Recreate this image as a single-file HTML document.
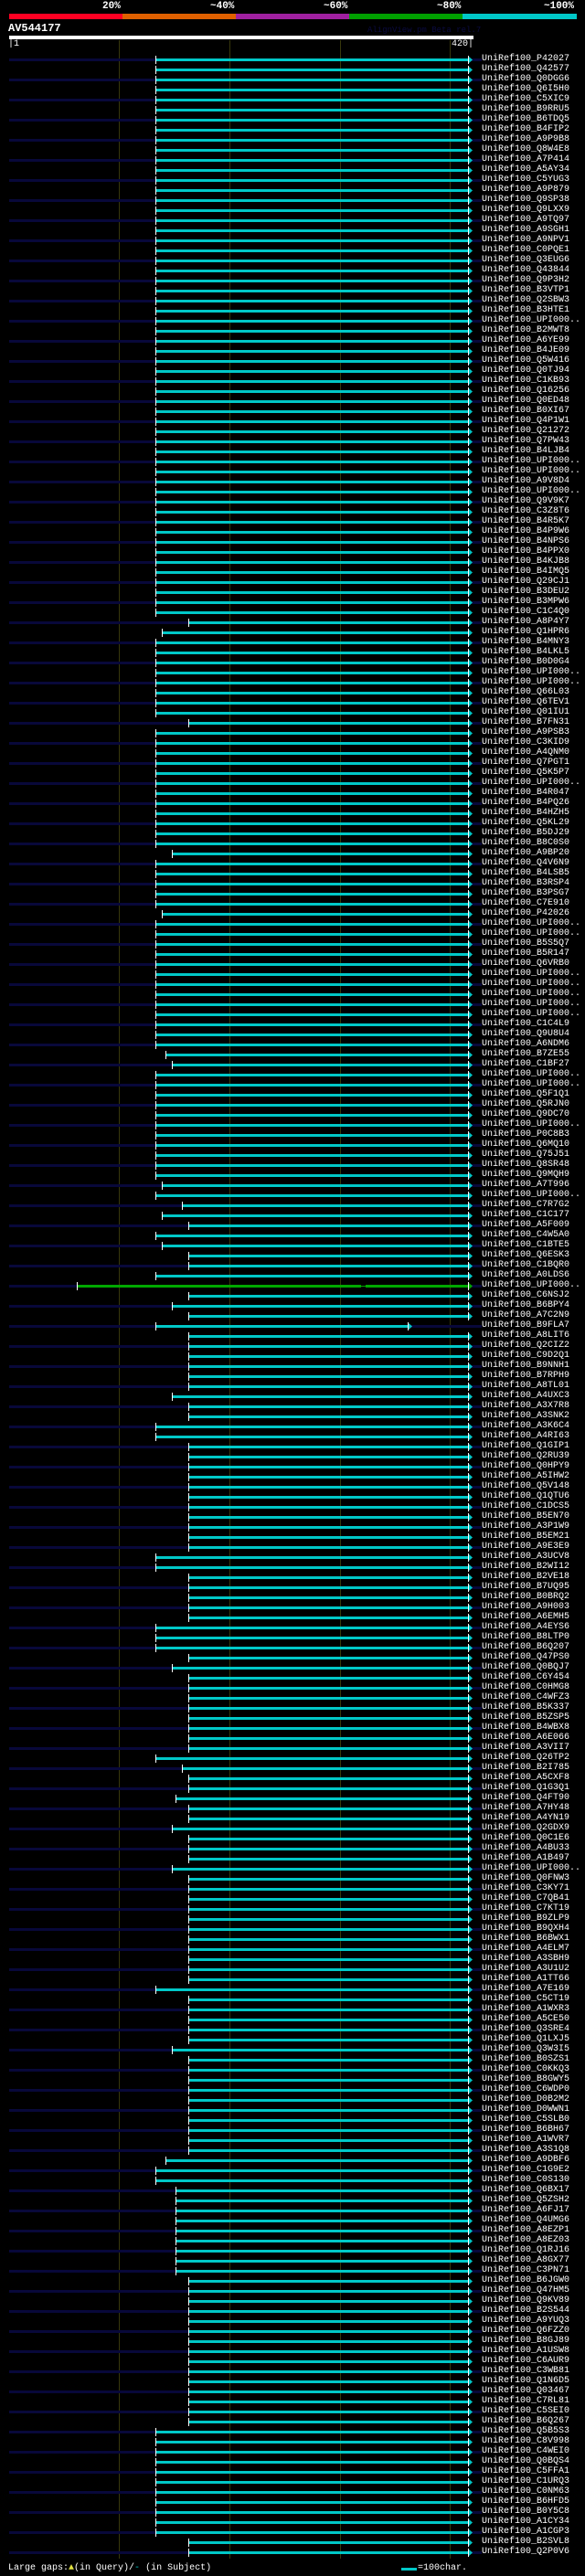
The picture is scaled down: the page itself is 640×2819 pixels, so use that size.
<!DOCTYPE html>
<html><head><meta charset="utf-8">
<style>
html,body{margin:0;padding:0;background:#000;}
body{width:640px;height:2819px;position:relative;overflow:hidden;font-family:"Liberation Mono","DejaVu Sans Mono",monospace;color:#fff;}
#g{position:absolute;left:0;top:0;}
.t{position:absolute;white-space:pre;}
#labels{position:absolute;left:527px;top:59px;font-size:10px;line-height:11px;white-space:pre;color:#fff;}
</style></head><body>
<svg id="g" width="640" height="2819" xmlns="http://www.w3.org/2000/svg">
<rect x="10" y="15" width="124" height="6" fill="#ff0022"/>
<rect x="134" y="15" width="124" height="6" fill="#e06000"/>
<rect x="258" y="15" width="124" height="6" fill="#a020a0"/>
<rect x="382" y="15" width="124" height="6" fill="#00a000"/>
<rect x="506" y="15" width="125" height="6" fill="#00c8c8"/>
<rect x="10" y="39" width="508" height="4" fill="#fff"/>
</svg>
<div class="t" style="left:112px;top:1px;font-size:11px;font-weight:bold;">20%</div>
<div class="t" style="left:230px;top:1px;font-size:11px;font-weight:bold;">~40%</div>
<div class="t" style="left:354px;top:1px;font-size:11px;font-weight:bold;">~60%</div>
<div class="t" style="left:478px;top:1px;font-size:11px;font-weight:bold;">~80%</div>
<div class="t" style="left:595px;top:1px;font-size:11px;font-weight:bold;">~100%</div>
<div class="t" style="left:9px;top:24px;font-size:12px;font-weight:bold;">AV544177</div>
<div class="t" style="left:402px;top:28px;font-size:9px;color:#0a0a40;">AlignView.pm Beta rel.7</div>
<div class="t" style="left:9px;top:43px;font-size:10px;">|1</div>
<div class="t" style="left:494px;top:43px;font-size:10px;">420|</div>
<div id="labels">UniRef100_P42027
UniRef100_Q42577
UniRef100_Q0DGG6
UniRef100_Q6I5H0
UniRef100_C5XIC9
UniRef100_B9RRU5
UniRef100_B6TDQ5
UniRef100_B4FIP2
UniRef100_A9P9B8
UniRef100_Q8W4E8
UniRef100_A7P414
UniRef100_A5AY34
UniRef100_C5YUG3
UniRef100_A9P879
UniRef100_Q9SP38
UniRef100_Q9LXX9
UniRef100_A9TQ97
UniRef100_A9SGH1
UniRef100_A9NPV1
UniRef100_C0PQE1
UniRef100_Q3EUG6
UniRef100_Q43844
UniRef100_Q9P3H2
UniRef100_B3VTP1
UniRef100_Q2SBW3
UniRef100_B3HTE1
UniRef100_UPI000..
UniRef100_B2MWT8
UniRef100_A6YE99
UniRef100_B4JE09
UniRef100_Q5W416
UniRef100_Q0TJ94
UniRef100_C1KB93
UniRef100_Q16256
UniRef100_Q0ED48
UniRef100_B0XI67
UniRef100_Q4P1W1
UniRef100_Q21272
UniRef100_Q7PW43
UniRef100_B4LJB4
UniRef100_UPI000..
UniRef100_UPI000..
UniRef100_A9V8D4
UniRef100_UPI000..
UniRef100_Q9V9K7
UniRef100_C3Z8T6
UniRef100_B4R5K7
UniRef100_B4P9W6
UniRef100_B4NPS6
UniRef100_B4PPX0
UniRef100_B4KJB8
UniRef100_B4IMQ5
UniRef100_Q29CJ1
UniRef100_B3DEU2
UniRef100_B3MPW6
UniRef100_C1C4Q0
UniRef100_A8P4Y7
UniRef100_Q1HPR6
UniRef100_B4MNY3
UniRef100_B4LKL5
UniRef100_B0D0G4
UniRef100_UPI000..
UniRef100_UPI000..
UniRef100_Q66L03
UniRef100_Q6TEV1
UniRef100_Q01IU1
UniRef100_B7FN31
UniRef100_A9PSB3
UniRef100_C3KID9
UniRef100_A4QNM0
UniRef100_Q7PGT1
UniRef100_Q5K5P7
UniRef100_UPI000..
UniRef100_B4R047
UniRef100_B4PQ26
UniRef100_B4HZH5
UniRef100_Q5KL29
UniRef100_B5DJ29
UniRef100_B8C0S0
UniRef100_A9BP20
UniRef100_Q4V6N9
UniRef100_B4LSB5
UniRef100_B3RSP4
UniRef100_B3PSG7
UniRef100_C7E910
UniRef100_P42026
UniRef100_UPI000..
UniRef100_UPI000..
UniRef100_B5S5Q7
UniRef100_B5R147
UniRef100_Q6VRB0
UniRef100_UPI000..
UniRef100_UPI000..
UniRef100_UPI000..
UniRef100_UPI000..
UniRef100_UPI000..
UniRef100_C1C4L9
UniRef100_Q9U8U4
UniRef100_A6NDM6
UniRef100_B7ZE55
UniRef100_C1BF27
UniRef100_UPI000..
UniRef100_UPI000..
UniRef100_Q5F1Q1
UniRef100_Q5RJN0
UniRef100_Q9DC70
UniRef100_UPI000..
UniRef100_P0C8B3
UniRef100_Q6MQ10
UniRef100_Q75J51
UniRef100_Q8SR48
UniRef100_Q9MQH9
UniRef100_A7T996
UniRef100_UPI000..
UniRef100_C7R7G2
UniRef100_C1C177
UniRef100_A5F009
UniRef100_C4W5A0
UniRef100_C1BTE5
UniRef100_Q6ESK3
UniRef100_C1BQR0
UniRef100_A0LDS6
UniRef100_UPI000..
UniRef100_C6NSJ2
UniRef100_B6BPY4
UniRef100_A7C2N9
UniRef100_B9FLA7
UniRef100_A8LIT6
UniRef100_Q2CIZ2
UniRef100_C9D2Q1
UniRef100_B9NNH1
UniRef100_B7RPH9
UniRef100_A8TL01
UniRef100_A4UXC3
UniRef100_A3X7R8
UniRef100_A3SNK2
UniRef100_A3K6C4
UniRef100_A4RI63
UniRef100_Q1GIP1
UniRef100_Q2RU39
UniRef100_Q0HPY9
UniRef100_A5IHW2
UniRef100_Q5V148
UniRef100_Q1QTU6
UniRef100_C1DCS5
UniRef100_B5EN70
UniRef100_A3P1W9
UniRef100_B5EM21
UniRef100_A9E3E9
UniRef100_A3UCV8
UniRef100_B2WI12
UniRef100_B2VE18
UniRef100_B7UQ95
UniRef100_B0BRQ2
UniRef100_A9H003
UniRef100_A6EMH5
UniRef100_A4EYS6
UniRef100_B8LTP0
UniRef100_B6Q207
UniRef100_Q47PS0
UniRef100_Q0BQJ7
UniRef100_C6Y454
UniRef100_C0HMG8
UniRef100_C4WFZ3
UniRef100_B5K337
UniRef100_B5ZSP5
UniRef100_B4WBX8
UniRef100_A6E066
UniRef100_A3VII7
UniRef100_Q26TP2
UniRef100_B2I785
UniRef100_A5CXF8
UniRef100_Q1G3Q1
UniRef100_Q4FT90
UniRef100_A7HY48
UniRef100_A4YN19
UniRef100_Q2GDX9
UniRef100_Q0C1E6
UniRef100_A4BU33
UniRef100_A1B497
UniRef100_UPI000..
UniRef100_Q0FNW3
UniRef100_C3KY71
UniRef100_C7QB41
UniRef100_C7KT19
UniRef100_B9ZLP9
UniRef100_B9QXH4
UniRef100_B6BWX1
UniRef100_A4ELM7
UniRef100_A3SBH9
UniRef100_A3U1U2
UniRef100_A1TT66
UniRef100_A7E169
UniRef100_C5CT19
UniRef100_A1WXR3
UniRef100_A5CE50
UniRef100_Q3SRE4
UniRef100_Q1LXJ5
UniRef100_Q3W3I5
UniRef100_B0SZS1
UniRef100_C0KKQ3
UniRef100_B8GWY5
UniRef100_C6WDP0
UniRef100_D0B2M2
UniRef100_D0WWN1
UniRef100_C5SLB0
UniRef100_B6BH67
UniRef100_A1WVR7
UniRef100_A3S1Q8
UniRef100_A9DBF6
UniRef100_C1G9E2
UniRef100_C0S130
UniRef100_Q6BX17
UniRef100_Q5ZSH2
UniRef100_A6FJ17
UniRef100_Q4UMG6
UniRef100_A8EZP1
UniRef100_A8EZ03
UniRef100_Q1RJ16
UniRef100_A8GX77
UniRef100_C3PN71
UniRef100_B6JGW0
UniRef100_Q47HM5
UniRef100_Q9KV89
UniRef100_B2S544
UniRef100_A9YUQ3
UniRef100_Q6FZZ0
UniRef100_B8GJ89
UniRef100_A1USW8
UniRef100_C6AUR9
UniRef100_C3WB81
UniRef100_Q1N6D5
UniRef100_Q03467
UniRef100_C7RL81
UniRef100_C5SEI0
UniRef100_B6Q267
UniRef100_Q5B5S3
UniRef100_C8V998
UniRef100_C4WEI0
UniRef100_Q0BQS4
UniRef100_C5FFA1
UniRef100_C1URQ3
UniRef100_C0NM63
UniRef100_B6HFD5
UniRef100_B0Y5C8
UniRef100_A1CY34
UniRef100_A1CGP3
UniRef100_B2SVL8
UniRef100_Q2P0V6</div>
<div class="t" style="left:9px;top:2805px;font-size:10px;">Large gaps:<span style="color:#e0e040">&#9650;</span>(in Query)/<span style="color:#00c8c8">-</span> (in Subject)</div>
<div class="t" style="left:457px;top:2805px;font-size:10px;">=100char.</div>
<script>
(function(){
var svg=document.getElementById('g'),NS='http://www.w3.org/2000/svg',h='';
var N=249,S={};
function set(a,v){a.forEach(function(i){S[i]=v;});}
set([56,66,116,119,120,123],206);
set([57,85,112,115,118],177);
set([79,100,124,133,160,176,180,198],188);
set([99,209],181);
set([114,170],199);
set([173],192);
set([212,213,214,215,216,217,218,219,220],192);
set([126,136,137,149,150,156,157,158,169,192,210,211],170);
for(var i=236;i<=246;i++)S[i]=170;
S[122]=84;
// grid
[130,251,372,492].forEach(function(x){h+='<rect x="'+x+'" y="44" width="1" height="2756" fill="#38380c"/>';});
for(var i=0;i<N;i++){
 var y=65+11*i;
 if(i%2==0) h+='<rect x="10" y="'+(y-1)+'" width="517" height="3" fill="#08083a"/>';
 var s=S[i]!==undefined?S[i]:(i<123?170:206);
 var e=(i==126)?446:512;
 var c=(i==122)?'#00a800':'#00c8c8';
 h+='<rect x="'+s+'" y="'+(y-1)+'" width="'+(e-s)+'" height="3" fill="'+c+'"/>';
 if(i==122) h+='<rect x="395" y="'+(y-1)+'" width="5" height="3" fill="#000"/><rect x="395" y="'+y+'" width="5" height="1" fill="#00a800"/>';
 h+='<rect x="'+s+'" y="'+(y-4)+'" width="1" height="9" fill="#fff"/>';
 h+='<rect x="'+e+'" y="'+(y-4)+'" width="1" height="9" fill="#fff"/>';
 h+='<path d="M'+(e+1)+' '+(y-3)+'L'+(e+5)+' '+(y+0.5)+'L'+(e+1)+' '+(y+4)+'Z" fill="'+c+'"/>';
}
h+='<rect x="439" y="2810" width="17" height="3" fill="#00c8c8"/>';
svg.insertAdjacentHTML('beforeend',h);
})();
</script>
</body></html>
